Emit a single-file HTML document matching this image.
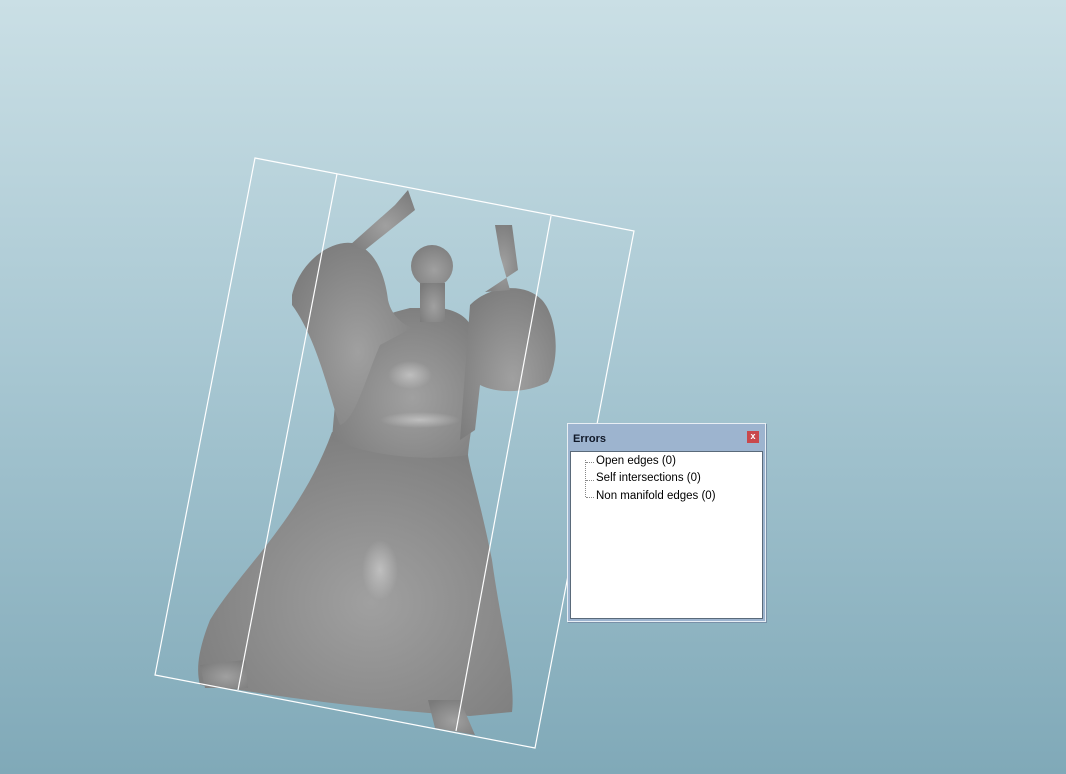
<!DOCTYPE html>
<html><head><meta charset="utf-8"><style>
html,body{margin:0;padding:0}
body{width:1066px;height:774px;overflow:hidden;position:relative;background:linear-gradient(#cadfe5 0%,#a9c8d3 45%,#80a9b8 100%);font-family:"Liberation Sans",sans-serif}
svg{position:absolute;left:0;top:0}
.dlg{position:absolute;left:567px;top:423px;width:197px;height:197px;background:#9db4cf;border:1px solid #e8eef4;box-shadow:1px 1px 0 #7890a8}
.ttl{position:absolute;left:5px;top:9px;font-size:11px;font-weight:bold;color:#101828}
.x{position:absolute;right:6px;top:7px;width:12px;height:12px;background:#c9474c;color:#fff;font-size:9px;font-weight:bold;text-align:center;line-height:11px}
.body{position:absolute;left:2px;top:27px;width:191px;height:166px;background:#fff;border:1px solid #5a6a7a}
.it{position:absolute;left:25px;font-size:11.5px;color:#000}
.tree{position:absolute;left:14px;top:8px;width:1px;height:37px;border-left:1px dotted #888}
.h{position:absolute;left:15px;width:8px;border-top:1px dotted #888}
</style></head><body>
<svg width="1066" height="774" viewBox="0 0 1066 774">
<defs>
<radialGradient id="g" cx="0.55" cy="0.6" r="0.7"><stop offset="0" stop-color="#a0a0a0"/><stop offset="1" stop-color="#7a7a7a"/></radialGradient>
<radialGradient id="hl" cx="0.5" cy="0.5" r="0.5"><stop offset="0" stop-color="#c8c8c8" stop-opacity="0.8"/><stop offset="1" stop-color="#c8c8c8" stop-opacity="0"/></radialGradient>
</defs>
<g fill="url(#g)">
<path d="M332,432 C300,520 240,570 210,620 C198,650 196,670 200,685 L240,690 C300,700 400,712 470,716 L512,712 C516,680 500,620 492,560 C480,500 470,470 468,455 Z"/>
<path d="M340,345 C345,330 380,315 410,308 L440,308 C470,312 478,330 478,360 C478,400 470,430 468,455 C420,462 370,455 332,440 C334,410 338,380 340,345 Z"/>
<path d="M292,295 C300,262 330,240 352,243 C375,248 385,275 388,300 C392,318 405,325 412,328 L380,345 C365,380 355,420 340,425 C330,400 318,340 292,305 Z"/>
<path d="M470,305 C490,285 525,282 542,300 C558,318 560,360 548,382 C530,392 500,395 480,385 L475,430 L460,440 Z"/>
<circle cx="432" cy="266" r="21"/>
<path d="M420,283 L445,283 L445,322 L420,322 Z"/>
<path d="M350,245 L395,205 L408,190 L415,210 L365,250 Z"/>
<path d="M485,292 L510,290 L500,255 L495,225 L512,225 L518,270 Z"/>
<path d="M200,665 L245,660 L248,688 L205,688 Z"/>
<path d="M428,700 L460,700 L475,735 L435,728 Z"/>
</g>
<ellipse cx="380" cy="570" rx="18" ry="30" fill="url(#hl)"/>
<ellipse cx="410" cy="375" rx="22" ry="14" fill="url(#hl)"/>
<ellipse cx="420" cy="420" rx="40" ry="8" fill="url(#hl)"/>
<g stroke="#fff" stroke-width="1.2" fill="none">
<polygon points="255,158 634,231 535,748 155,675"/>
<line x1="337" y1="174" x2="238" y2="690"/>
<line x1="551" y1="216" x2="456" y2="731"/>
</g>
</svg>
<div class="dlg">
<div class="ttl">Errors</div>
<div class="x">x</div>
<div class="body">
<div class="tree"></div>
<div class="h" style="top:10px"></div>
<div class="h" style="top:28px"></div>
<div class="h" style="top:45px"></div>
<div class="it" style="top:3px">Open edges (0)</div>
<div class="it" style="top:20px">Self intersections (0)</div>
<div class="it" style="top:38px">Non manifold edges (0)</div>
</div>
</div>
</body></html>
